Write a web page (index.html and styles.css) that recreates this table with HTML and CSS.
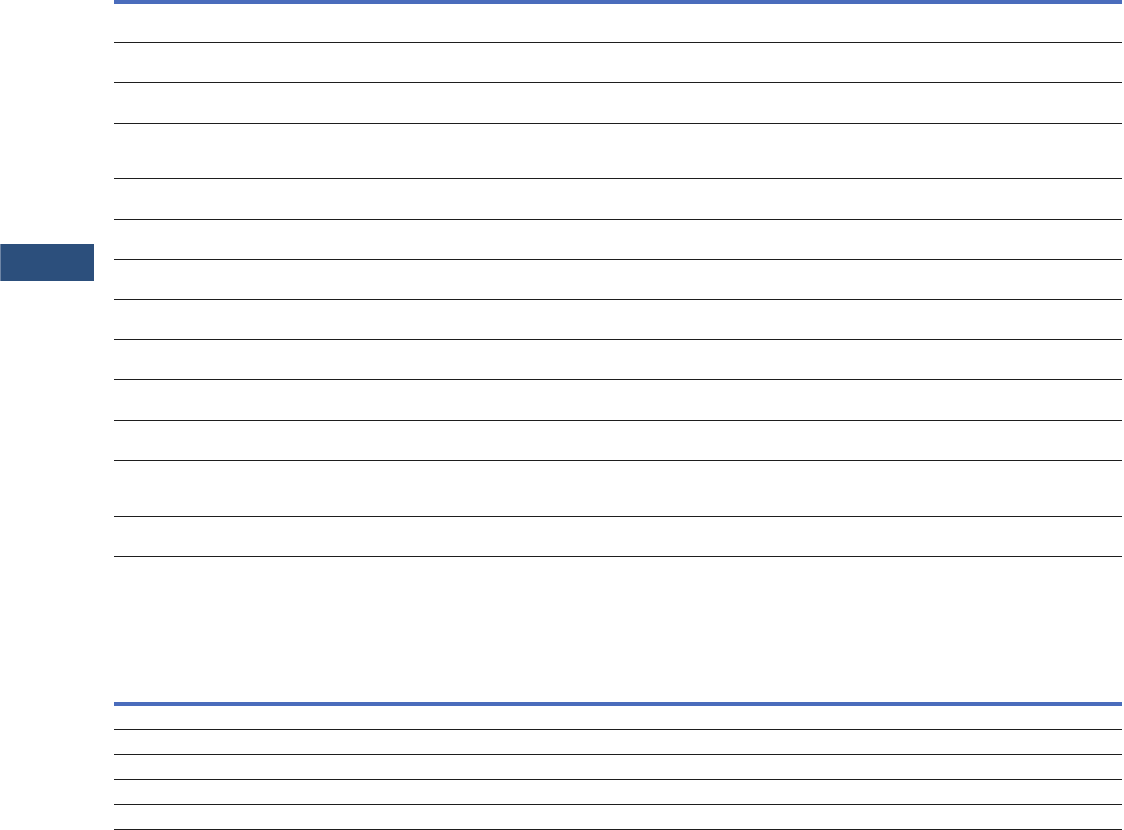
FILE: index.html
```html
<!DOCTYPE html>
<html>
<head>
<meta charset="utf-8">
<link rel="stylesheet" href="styles.css">
</head>
<body>
<div class="page">
  <aside class="side">
    <div class="tab"></div>
  </aside>
  <main class="content">
    <div class="table first">
      <div class="row h38"></div>
      <div class="row h39"></div>
      <div class="row h40"></div>
      <div class="row h54"></div>
      <div class="row h40"></div>
      <div class="row h39"></div>
      <div class="row h39"></div>
      <div class="row h39"></div>
      <div class="row h39"></div>
      <div class="row h40"></div>
      <div class="row h39"></div>
      <div class="row h55"></div>
      <div class="row h39"></div>
    </div>
    <div class="table second">
      <div class="row h23"></div>
      <div class="row h24"></div>
      <div class="row h24"></div>
      <div class="row h24"></div>
      <div class="row h24"></div>
    </div>
  </main>
</div>
</body>
</html>
```
FILE: styles.css
```css
html, body {
  margin: 0;
  padding: 0;
  background: #ffffff;
  font-family: "Liberation Sans", Arial, sans-serif;
}
.page {
  display: flex;
  width: 1124px;
  height: 830px;
  overflow: hidden;
}
.side {
  width: 94px;
  flex: none;
  padding-top: 244px;
}
.tab {
  width: 93px;
  height: 37px;
  background: #2c4f7c;
  border-left: 1px solid #6f86a6;
}
.content {
  margin-left: 20px;
  width: 1008px;
  flex: none;
  display: flex;
  flex-direction: column;
}
.table {
  border-top: 4px solid #4a6cbc;
}
.second {
  margin-top: 145px;
}
.row {
  border-bottom: 1px solid #1e1e1e;
}
.h23 { height: 23px; }
.h24 { height: 24px; }
.h38 { height: 38px; }
.h39 { height: 39px; }
.h40 { height: 40px; }
.h54 { height: 54px; }
.h55 { height: 55px; }
```
